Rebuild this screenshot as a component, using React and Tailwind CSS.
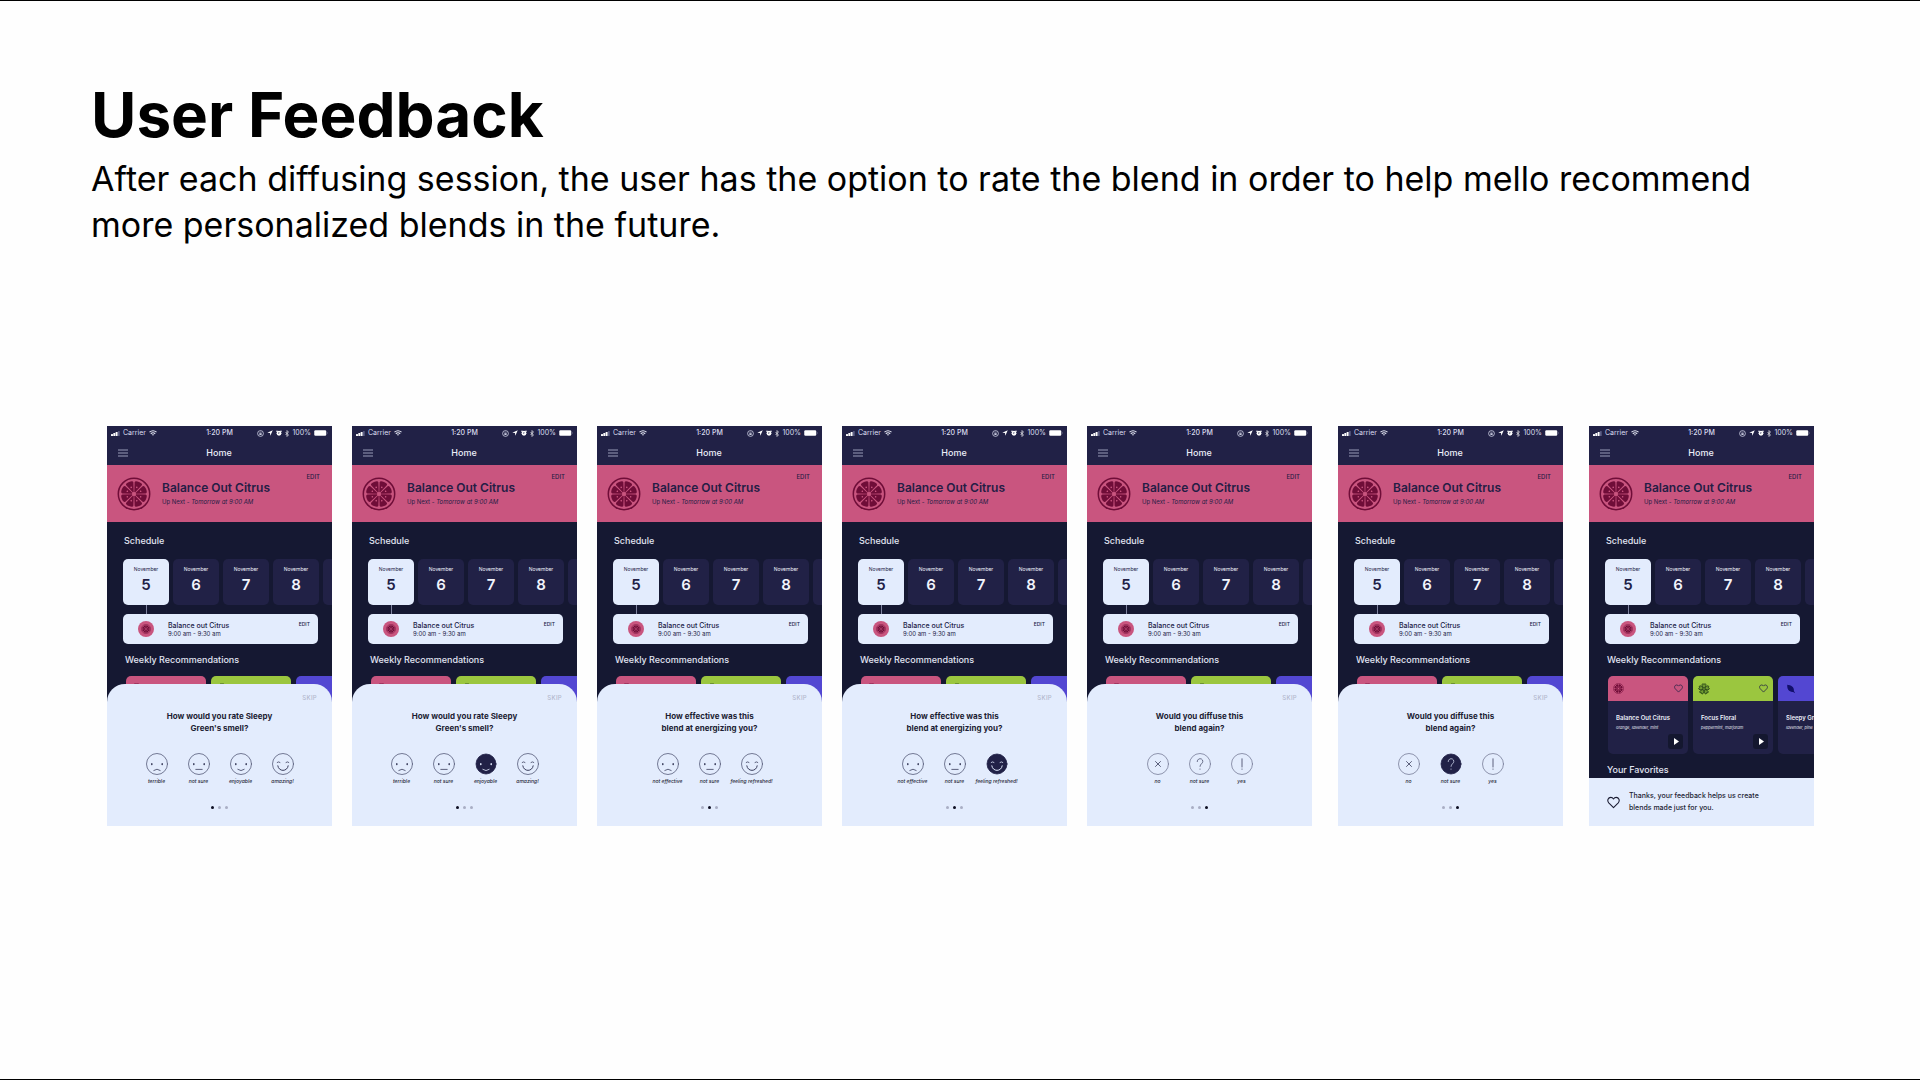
import React from "react";

const steps = [
  {
    question: ["How would you rate Sleepy", "Green's smell?"],
    options: [["sad", "terrible"], ["flat", "not sure"], ["smile", "enjoyable"], ["grin", "amazing!"]],
  },
  {
    question: ["How effective was this", "blend at energizing you?"],
    options: [["sad", "not effective"], ["flat", "not sure"], ["grin", "feeling refreshed!"]],
  },
  {
    question: ["Would you diffuse this", "blend again?"],
    options: [["cross", "no"], ["question", "not sure"], ["bang", "yes"]],
  },
];

const phones = [
  { step: 0, picked: -1 },
  { step: 0, picked: 2 },
  { step: 1, picked: -1 },
  { step: 1, picked: 2 },
  { step: 2, picked: -1 },
  { step: 2, picked: 1 },
  { step: -1, picked: -1 },
];

const blends = [
  { name: "Balance Out Citrus", notes: "orange, lavender, mint", head: "bg-[#c9557f]", icon: "citrus" },
  { name: "Focus Floral", notes: "peppermint, marjoram", head: "bg-[#9bc63f]", icon: "flower" },
  { name: "Sleepy Green", notes: "lavender, pine", head: "bg-[#5347d2]", icon: "leaf" },
];

function Citrus({ className, dark = "#6f0d38", light = "#c9557f" }) {
  return (
    <svg viewBox="0 0 34 34" className={className} aria-hidden="true">
      <circle cx="17" cy="17" r="15.7" fill={light} stroke={dark} strokeWidth="1.5" />
      {[0, 45, 90, 135, 180, 225, 270, 315].map((a) => (
        <g key={a} transform={`rotate(${a + 22.5} 17 17)`}>
          <path d="M17.5 15 L20.9 6 Q21.1 4.9 20 4.4 Q18.7 3.9 17 3.9 Q15.3 3.9 14 4.4 Q12.9 4.9 13.1 6 L16.5 15 Z" fill={dark} />
          <circle cx="17" cy="9.8" r="0.8" fill={light} />
        </g>
      ))}
    </svg>
  );
}

function Flower({ className }) {
  return (
    <svg viewBox="0 0 24 24" className={className} fill="none" stroke="#24401a" strokeWidth="1.6" aria-hidden="true">
      {[0, 72, 144, 216, 288].map((a) => (
        <path key={a} d="M12 11 C7 7 7.5 0.5 10.2 1.6 L12 3 L13.8 1.6 C16.5 0.5 17 7 12 11 Z" fill="#6f9a30" transform={`rotate(${a} 12 12)`} />
      ))}
      <circle cx="12" cy="12" r="2.4" fill="#9bc63f" />
    </svg>
  );
}

function Leaf({ className }) {
  return (
    <svg viewBox="0 0 24 24" className={className} aria-hidden="true">
      <path d="M3 2 C12 3 20 7 19 17 L22 22 L17 19 C8 20 2 13 3 2 Z" fill="#120f6b" />
    </svg>
  );
}

function Heart({ className }) {
  return (
    <svg viewBox="0 0 24 24" className={className} fill="none" stroke="currentColor" strokeLinejoin="round" strokeWidth="2" aria-hidden="true">
      <path d="M12 21.5 L3.2 12.6 C-0.4 8.6 2.2 2.5 7 2.5 C9.4 2.5 11 3.8 12 5.6 C13 3.8 14.6 2.5 17 2.5 C21.8 2.5 24.4 8.6 20.8 12.6 Z" />
    </svg>
  );
}

function OptionIcon({ kind, picked }) {
  const line = picked ? "#dfe8fb" : "#3a3d5c";
  const symbol = kind === "cross" || kind === "question" || kind === "bang";
  return (
    <svg viewBox="0 0 22 22" className="size-[22px]" fill="none" stroke={line} strokeLinecap="round" strokeWidth="0.8" aria-hidden="true">
      <circle
        cx="11"
        cy="11"
        r={picked ? 10 : 10.5}
        fill={picked ? "#212147" : "none"}
        stroke={picked ? "#212147" : symbol ? "#777c98" : "#555a78"}
        strokeWidth="0.8"
      />
      {(kind === "sad" || kind === "flat" || kind === "smile") && (
        <g fill={line} stroke="none">
          <ellipse cx="5.8" cy="11.2" rx="0.8" ry="1.1" />
          <ellipse cx="16.2" cy="11.2" rx="0.8" ry="1.1" />
        </g>
      )}
      {kind === "sad" && <path d="M7.8 17.4 Q11 14.8 14.2 17.4" />}
      {kind === "flat" && <path d="M7.8 16.4 H14.2" />}
      {kind === "smile" && <path d="M7.8 16.4 Q11 19 14.2 16.4" />}
      {kind === "grin" && <path d="M5.2 9.4 Q6.6 8.2 8 9.4 M14 9.4 Q15.4 8.2 16.8 9.4" />}
      {kind === "grin" && <path d="M5.8 12.8 C6.6 19 15.4 19 16.2 12.8" strokeWidth="1" />}
      {kind === "cross" && <path d="M8.5 8.5 L13.5 13.5 M13.5 8.5 L8.5 13.5" />}
      {kind === "question" && <path d="M8.2 8.6 C8.2 4.6 13.8 4.8 13.8 8.4 C13.8 10.8 11 10.8 11 13.4 M11 16 V16.3" strokeWidth="0.7" />}
      {kind === "bang" && <path d="M11 5.8 V14 M11 16 V16.3" />}
    </svg>
  );
}

function StatusBar() {
  return (
    <div className="grid h-[14px] grid-cols-[1fr_auto_1fr] items-center px-[4px] text-[7px] leading-[14px] font-medium text-[#dcdff0]">
      <div className="flex items-center gap-[3px]">
        <svg viewBox="0 0 18 10" className="h-[5px] w-[9px]" fill="#fff" aria-hidden="true">
          <rect x="0" y="6" width="4" height="4" rx="1" />
          <rect x="4.6" y="4" width="4" height="6" rx="1" />
          <rect x="9.2" y="2" width="4" height="8" rx="1" />
          <rect x="14" y="0" width="3.4" height="10" rx="1" fill="#5d5f86" />
        </svg>
        <span className="font-normal">Carrier</span>
        <svg viewBox="0 0 16 12" className="h-[6px] w-[8px]" fill="none" stroke="#e8eaf6" strokeWidth="2.2" aria-hidden="true">
          <path d="M1 4.4 Q8 -1.6 15 4.4 M3.6 7.4 Q8 3.8 12.4 7.4" />
          <path d="M8 11.6 L5.8 9.2 Q8 7.6 10.2 9.2 Z" fill="#e8eaf6" stroke="none" />
        </svg>
      </div>
      <span>1:20 PM</span>
      <div className="flex items-center justify-end gap-[3px]">
        <svg viewBox="0 0 14 14" className="size-[7px]" fill="none" stroke="#dcdff0" strokeWidth="1.5" aria-hidden="true">
          <circle cx="7" cy="7" r="5.8" />
          <rect x="4.8" y="6.6" width="4.4" height="3.2" fill="#dcdff0" stroke="none" />
          <path d="M5.6 6.6 V5.2 Q7 3.2 8.4 5.2 V6.6" strokeWidth="1" />
        </svg>
        <svg viewBox="0 0 12 12" className="size-[6px]" fill="#fff" aria-hidden="true">
          <path d="M11.5 0.5 L6.6 11.5 L6 6 L0.5 5.4 Z" />
        </svg>
        <svg viewBox="0 0 14 14" className="size-[6px]" fill="#fff" aria-hidden="true">
          <circle cx="7" cy="7.6" r="5.6" />
          <circle cx="2.4" cy="2.8" r="1.9" />
          <circle cx="11.6" cy="2.8" r="1.9" />
          <path d="M7 4.6 V8 L4.6 7" fill="none" stroke="#212146" strokeWidth="1.3" />
        </svg>
        <svg viewBox="0 0 8 14" className="h-[7px] w-[4px]" fill="none" stroke="#fff" strokeWidth="1.3" aria-hidden="true">
          <path d="M1 4 L7 10 L4 13 V1 L7 4 L1 10" />
        </svg>
        <span className="font-normal">100%</span>
        <svg viewBox="0 0 28 12" className="h-[6px] w-[14px]" aria-hidden="true">
          <rect x="0.5" y="0.5" width="24" height="11" rx="2.4" fill="#fff" />
          <path d="M26 4 Q28 6 26 8 Z" fill="#a9abc6" />
        </svg>
      </div>
    </div>
  );
}

function BlendCard({ blend, open }) {
  return (
    <article className="flex w-[80px] shrink-0 flex-col overflow-hidden rounded-[5px] bg-[#212146] whitespace-nowrap text-[#eceef8]">
      <div className={`flex h-[25px] shrink-0 items-center justify-between px-[5px] ${blend.head}`}>
        {blend.icon === "citrus" && <Citrus className="size-[11px]" />}
        {blend.icon === "flower" && <Flower className="size-[12px]" />}
        {blend.icon === "leaf" && <Leaf className="ml-[3px] size-[10px]" />}
        <button type="button" aria-label={`Save ${blend.name}`} className="text-[#212146]">
          <Heart className="size-[9px]" />
        </button>
      </div>
      {open && (
        <div className="flex h-[53px] flex-col">
          <h4 className="mt-[12px] pl-[8px] text-[6px] leading-[10px] font-semibold">{blend.name}</h4>
          <p className="pl-[8px] text-[4px] leading-[10px] italic">{blend.notes}</p>
          <button type="button" aria-label={`Play ${blend.name}`} className="mt-[1px] mr-[5px] flex size-[15px] shrink-0 items-center justify-center self-end rounded-[3px] bg-[#14172f]">
            <svg viewBox="0 0 5 7" className="ml-[1px] h-[7px] w-[5px]" fill="#fff" aria-hidden="true">
              <path d="M0 0 L5 3.5 L0 7 Z" />
            </svg>
          </button>
        </div>
      )}
    </article>
  );
}

function Home({ open }) {
  return (
    <>
      <header className="bg-[#212146]">
        <StatusBar />
        <div className="grid h-[25px] grid-cols-[1fr_auto_1fr] items-center pr-[12px] pl-[11px]">
          <button type="button" aria-label="Menu" className="w-[10px]">
            <svg viewBox="0 0 10 8" className="h-[8px] w-[10px]" stroke="#b9bcd4" strokeWidth="0.8" aria-hidden="true">
              <path d="M0 1 H10 M0 4 H10 M0 7 H10" />
            </svg>
          </button>
          <h2 className="text-[9px] leading-[12px] font-medium text-[#eceef8]">Home</h2>
        </div>
      </header>

      <section className="flex h-[57px] bg-[#c9557f] pr-[12px] pl-[10px] text-[#251d45]">
        <Citrus className="mt-[12px] size-[34px] shrink-0" />
        <div className="mt-[15px] ml-[11px] min-w-0 flex-1 whitespace-nowrap">
          <h3 className="text-[12px] leading-[16px] font-semibold">Balance Out Citrus</h3>
          <p className="mt-[2px] text-[6px] leading-[8px]">
            Up Next - <i>Tomorrow at 9:00 AM</i>
          </p>
        </div>
        <button type="button" className="mt-[8px] self-start text-[6px] leading-[8px] font-medium">EDIT</button>
      </section>

      <h3 className="mt-[13px] pl-[17px] text-[9px] leading-[12px] font-medium text-[#e2e5f3]">Schedule</h3>
      <div className="mt-[12px] flex gap-[4px] overflow-hidden pl-[16px]">
        {["5", "6", "7", "8", ""].map((day, i) => (
          <button
            type="button"
            key={i}
            aria-label={day ? `November ${day}` : "Next day"}
            className={`flex h-[46px] w-[46px] shrink-0 flex-col items-center rounded-[5px] pt-[6px] ${i === 0 ? "bg-[#e3ecfd] text-[#212146]" : "bg-[#212146] text-[#f2f4fc]"}`}
          >
            {day && <span className="text-[5px] leading-[8px]">November</span>}
            <span className="mt-[3px] text-[15px] leading-[18px] font-semibold">{day}</span>
          </button>
        ))}
      </div>
      <div className="ml-[39px] h-[9px] w-px bg-[#7f83a0]" />
      <div className="mr-[14px] ml-[16px] flex h-[30px] items-start rounded-[5px] bg-[#e3ecfd] pr-[8px] pl-[15px] text-[#212146]">
        <span className="mt-[7px] flex size-[16px] shrink-0 items-center justify-center rounded-full bg-[#c9557f]">
          <Citrus className="size-[10px]" />
        </span>
        <div className="mt-[7px] ml-[14px] flex-1 whitespace-nowrap">
          <p className="text-[7px] leading-[9px] font-medium">Balance out Citrus</p>
          <p className="text-[6px] leading-[8px]">9:00 am - 9:30 am</p>
        </div>
        <button type="button" className="mt-[6px] text-[5px] leading-[8px] font-medium">EDIT</button>
      </div>

      <h3 className="mt-[10px] pl-[18px] text-[9px] leading-[12px] font-medium text-[#e2e5f3]">Weekly Recommendations</h3>
      <div className="mt-[10px] flex gap-[5px] overflow-hidden pl-[19px]">
        {blends.map((b) => (
          <BlendCard key={b.name} blend={b} open={open} />
        ))}
      </div>
      {open && <h3 className="mt-[10px] pl-[18px] text-[9px] leading-[12px] font-medium text-[#e2e5f3]">Your Favorites</h3>}
    </>
  );
}

function RatingSheet({ step, picked }) {
  const { question, options } = steps[step];
  return (
    <section className="absolute inset-x-0 bottom-0 flex h-[142px] flex-col items-center rounded-t-[18px] bg-[#e3ecfd]">
      <button type="button" className="mt-[10px] mr-[15px] self-end text-[6px] leading-[8px] font-medium tracking-wider text-[#b3b9cd]">SKIP</button>
      <h3 className="mt-[8px] text-center text-[8px] leading-[12px] font-bold text-[#1c1d33]">
        {question[0]}
        <br />
        {question[1]}
      </h3>
      <div className="mt-[19px] flex">
        {options.map(([kind, label], i) => (
          <button type="button" key={label} aria-pressed={i === picked} className="flex w-[42px] flex-col items-center">
            <OptionIcon kind={kind} picked={i === picked} />
            <span className="mt-[3px] text-[5px] leading-[6px] font-medium whitespace-nowrap text-[#1c1d33] italic">{label}</span>
          </button>
        ))}
      </div>
      <div className="mt-[22px] flex gap-[4px]">
        {steps.map((_, i) => (
          <span key={i} className={`size-[3px] rounded-full ${i === step ? "bg-[#0d0e22]" : "bg-[#a9aec4]"}`} />
        ))}
      </div>
    </section>
  );
}

function Toast() {
  return (
    <section className="absolute inset-x-0 bottom-0 flex h-[48px] items-center bg-[#e3ecfd] pl-[18px] text-[#1c1d33]">
      <Heart className="size-[13px]" />
      <p className="ml-[9px] text-[7px] leading-[12px] font-medium">
        Thanks, your feedback helps us create
        <br />
        blends made just for you.
      </p>
    </section>
  );
}

export default function App() {
  return (
    <main className="min-h-screen border-t border-b border-black bg-[#fefefe] pt-[75px] font-['Inter',sans-serif] text-black">
      <header className="px-[91px]">
        <h1 className="text-[62px] leading-[78px] font-bold">User Feedback</h1>
        <p className="mt-[2px] text-[34px] leading-[46px]">
          After each diffusing session, the user has the option to rate the blend in order to help mello recommend more personalized blends in the future.
        </p>
      </header>
      <div className="mt-[178px] flex flex-wrap gap-5 pr-[106px] pl-[107px]">
        {phones.map(({ step, picked }, i) => (
          <article key={i} className={`relative h-[400px] min-w-[200px] flex-1 overflow-hidden bg-[#151832] ${i > 4 ? "ml-[6px]" : ""}`}>
            <Home open={step < 0} />
            {step >= 0 ? <RatingSheet step={step} picked={picked} /> : <Toast />}
          </article>
        ))}
      </div>
    </main>
  );
}
